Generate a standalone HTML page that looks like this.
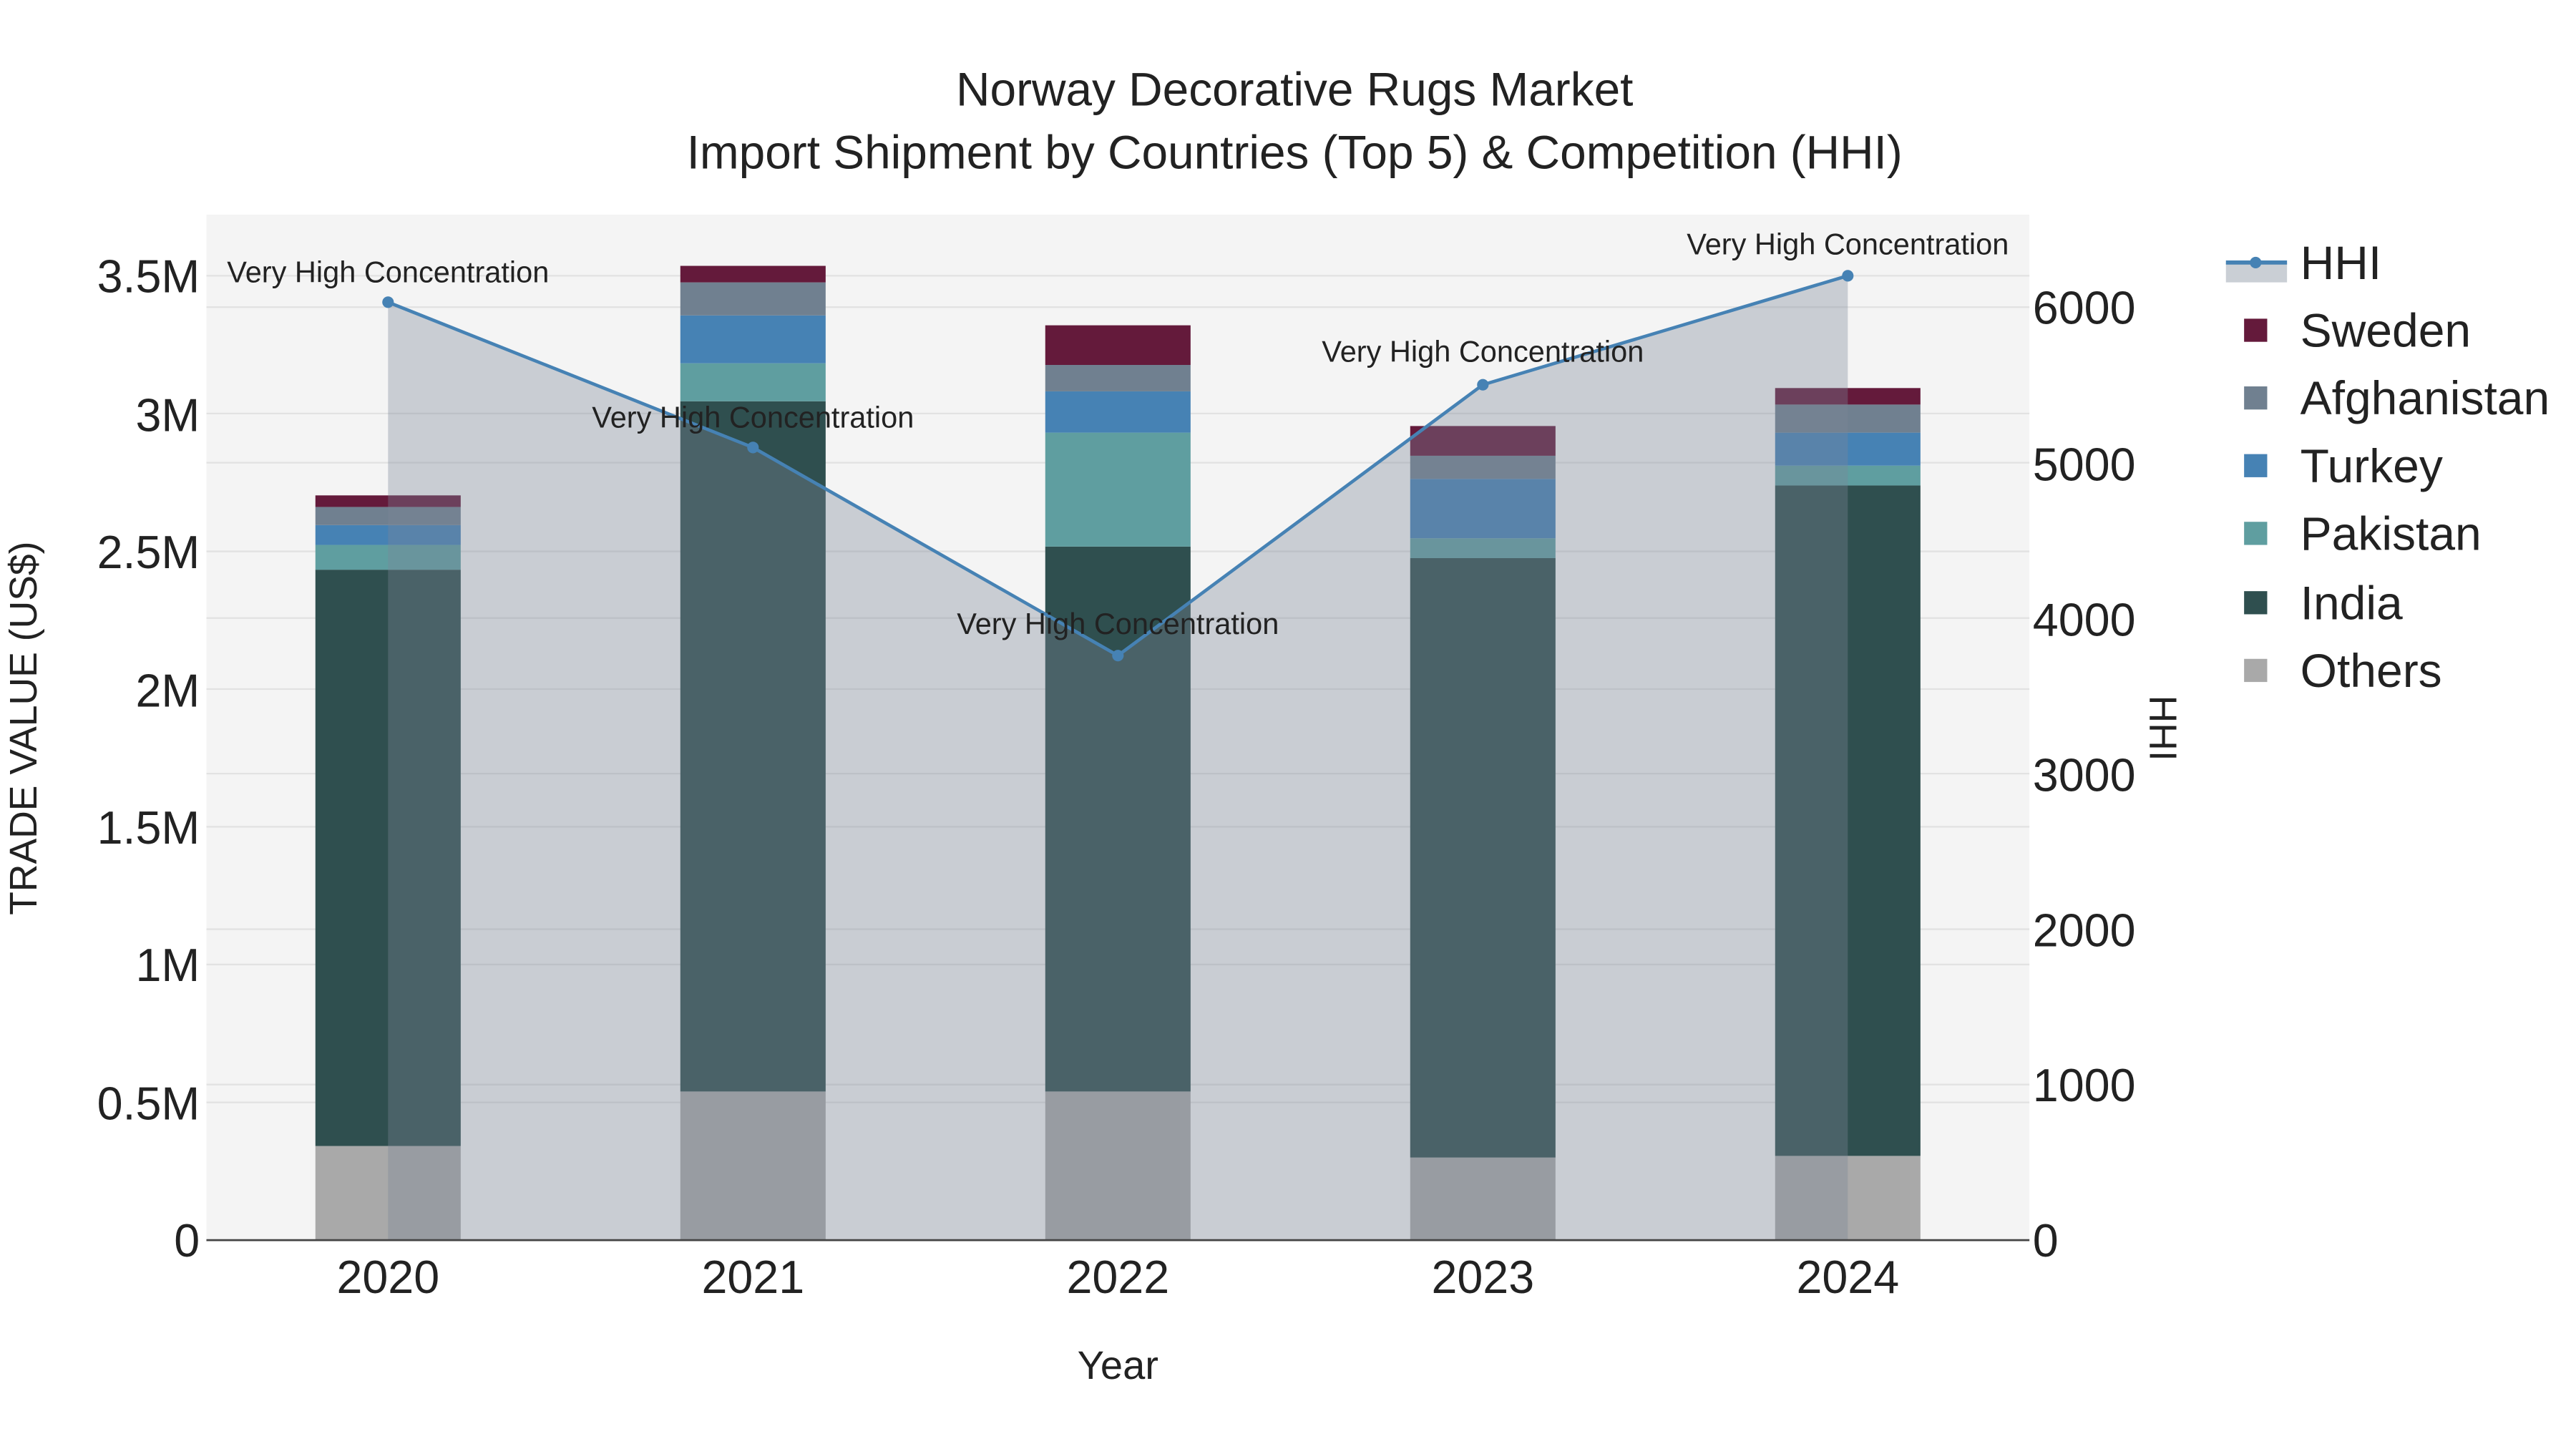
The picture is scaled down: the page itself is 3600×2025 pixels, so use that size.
<!DOCTYPE html>
<html><head><meta charset="utf-8"><style>
html,body{margin:0;padding:0;background:#fff;}
svg{display:block;}
text{font-family:"Liberation Sans",Arial,sans-serif;fill:#222;}
</style></head><body>
<svg width="3600" height="2025" viewBox="0 0 1560 877.5" xmlns="http://www.w3.org/2000/svg">
<rect x="0" y="0" width="1560" height="877.5" fill="#fff"/>
<rect x="125" y="130" width="1104" height="621" fill="#f4f4f4"/>
<g stroke="#e2e2e2" stroke-width="1">
<line x1="125" x2="1229" y1="667.6" y2="667.6"/><line x1="125" x2="1229" y1="584.1" y2="584.1"/>
<line x1="125" x2="1229" y1="500.7" y2="500.7"/><line x1="125" x2="1229" y1="417.3" y2="417.3"/>
<line x1="125" x2="1229" y1="333.9" y2="333.9"/><line x1="125" x2="1229" y1="250.4" y2="250.4"/>
<line x1="125" x2="1229" y1="167" y2="167"/>
<line x1="125" x2="1229" y1="656.8" y2="656.8"/><line x1="125" x2="1229" y1="562.7" y2="562.7"/>
<line x1="125" x2="1229" y1="468.5" y2="468.5"/><line x1="125" x2="1229" y1="374.3" y2="374.3"/>
<line x1="125" x2="1229" y1="280.2" y2="280.2"/><line x1="125" x2="1229" y1="186" y2="186"/>
</g>
<g>
<rect x="191" y="694" width="88" height="57" fill="#a9a9a9"/>
<rect x="191" y="345" width="88" height="349" fill="#2f4f4f"/>
<rect x="191" y="330" width="88" height="15" fill="#5f9ea0"/>
<rect x="191" y="318" width="88" height="12" fill="#4682b4"/>
<rect x="191" y="307" width="88" height="11" fill="#708090"/>
<rect x="191" y="300" width="88" height="7" fill="#641a3b"/>
<rect x="412" y="661" width="88" height="90" fill="#a9a9a9"/>
<rect x="412" y="243" width="88" height="418" fill="#2f4f4f"/>
<rect x="412" y="220" width="88" height="23" fill="#5f9ea0"/>
<rect x="412" y="191" width="88" height="29" fill="#4682b4"/>
<rect x="412" y="171" width="88" height="20" fill="#708090"/>
<rect x="412" y="161" width="88" height="10" fill="#641a3b"/>
<rect x="633" y="661" width="88" height="90" fill="#a9a9a9"/>
<rect x="633" y="331" width="88" height="330" fill="#2f4f4f"/>
<rect x="633" y="262" width="88" height="69" fill="#5f9ea0"/>
<rect x="633" y="237" width="88" height="25" fill="#4682b4"/>
<rect x="633" y="221" width="88" height="16" fill="#708090"/>
<rect x="633" y="197" width="88" height="24" fill="#641a3b"/>
<rect x="854" y="701" width="88" height="50" fill="#a9a9a9"/>
<rect x="854" y="338" width="88" height="363" fill="#2f4f4f"/>
<rect x="854" y="326" width="88" height="12" fill="#5f9ea0"/>
<rect x="854" y="290" width="88" height="36" fill="#4682b4"/>
<rect x="854" y="276" width="88" height="14" fill="#708090"/>
<rect x="854" y="258" width="88" height="18" fill="#641a3b"/>
<rect x="1075" y="700" width="88" height="51" fill="#a9a9a9"/>
<rect x="1075" y="294" width="88" height="406" fill="#2f4f4f"/>
<rect x="1075" y="282" width="88" height="12" fill="#5f9ea0"/>
<rect x="1075" y="262" width="88" height="20" fill="#4682b4"/>
<rect x="1075" y="245" width="88" height="17" fill="#708090"/>
<rect x="1075" y="235" width="88" height="10" fill="#641a3b"/>
</g>
<polygon points="235,751 235,183 456,271 677,397 898,233 1119,167 1119,751" fill="rgb(123,134,151)" fill-opacity="0.355"/>
<line x1="125" x2="1229" y1="751" y2="751" stroke="#444" stroke-width="1.2"/>
<polyline points="235,183 456,271 677,397 898,233 1119,167" fill="none" stroke="#4682b4" stroke-width="2"/>
<g fill="#4682b4"><circle cx="235" cy="183" r="3.5"/><circle cx="456" cy="271" r="3.5"/><circle cx="677" cy="397" r="3.5"/><circle cx="898" cy="233" r="3.5"/><circle cx="1119" cy="167" r="3.5"/></g>
<g font-size="18" text-anchor="middle">
<text x="235" y="171">Very High Concentration</text>
<text x="456" y="259">Very High Concentration</text>
<text x="677" y="384">Very High Concentration</text>
<text x="898" y="219">Very High Concentration</text>
<text x="1119" y="154">Very High Concentration</text>
</g>
<text x="784" y="64" font-size="28.5" text-anchor="middle">Norway Decorative Rugs Market</text>
<text x="784" y="102" font-size="28.5" text-anchor="middle">Import Shipment by Countries (Top 5) &amp; Competition (HHI)</text>
<g font-size="28" text-anchor="end">
<text x="121" y="761">0</text><text x="121" y="678">0.5M</text><text x="121" y="594">1M</text>
<text x="121" y="511">1.5M</text><text x="121" y="428">2M</text><text x="121" y="344">2.5M</text>
<text x="121" y="261">3M</text><text x="121" y="177">3.5M</text>
</g>
<g font-size="28" text-anchor="start">
<text x="1231" y="761">0</text><text x="1231" y="667">1000</text><text x="1231" y="573">2000</text>
<text x="1231" y="479">3000</text><text x="1231" y="385">4000</text><text x="1231" y="291">5000</text>
<text x="1231" y="196">6000</text>
</g>
<g font-size="28" text-anchor="middle">
<text x="235" y="783">2020</text><text x="456" y="783">2021</text><text x="677" y="783">2022</text>
<text x="898" y="783">2023</text><text x="1119" y="783">2024</text>
</g>
<text x="677" y="835" font-size="24.3" text-anchor="middle">Year</text>
<text transform="translate(22,441) rotate(-90)" font-size="23.2" text-anchor="middle">TRADE VALUE (US$)</text>
<text transform="translate(1302,441) rotate(90)" font-size="23.2" text-anchor="middle">HHI</text>
<rect x="1348" y="159" width="37" height="12" fill="rgb(123,134,151)" fill-opacity="0.4"/>
<line x1="1348" x2="1385" y1="159" y2="159" stroke="#4682b4" stroke-width="2.5"/>
<circle cx="1366" cy="159" r="3.5" fill="#4682b4"/>
<rect x="1359" y="193" width="14" height="14" fill="#641a3b"/>
<rect x="1359" y="234" width="14" height="14" fill="#708090"/>
<rect x="1359" y="275" width="14" height="14" fill="#4682b4"/>
<rect x="1359" y="316" width="14" height="14" fill="#5f9ea0"/>
<rect x="1359" y="358" width="14" height="14" fill="#2f4f4f"/>
<rect x="1359" y="399" width="14" height="14" fill="#a9a9a9"/>
<g font-size="28.6">
<text x="1393" y="169">HHI</text><text x="1393" y="210">Sweden</text><text x="1393" y="251">Afghanistan</text>
<text x="1393" y="292">Turkey</text><text x="1393" y="333">Pakistan</text><text x="1393" y="375">India</text>
<text x="1393" y="416">Others</text>
</g>
</svg>
</body></html>
